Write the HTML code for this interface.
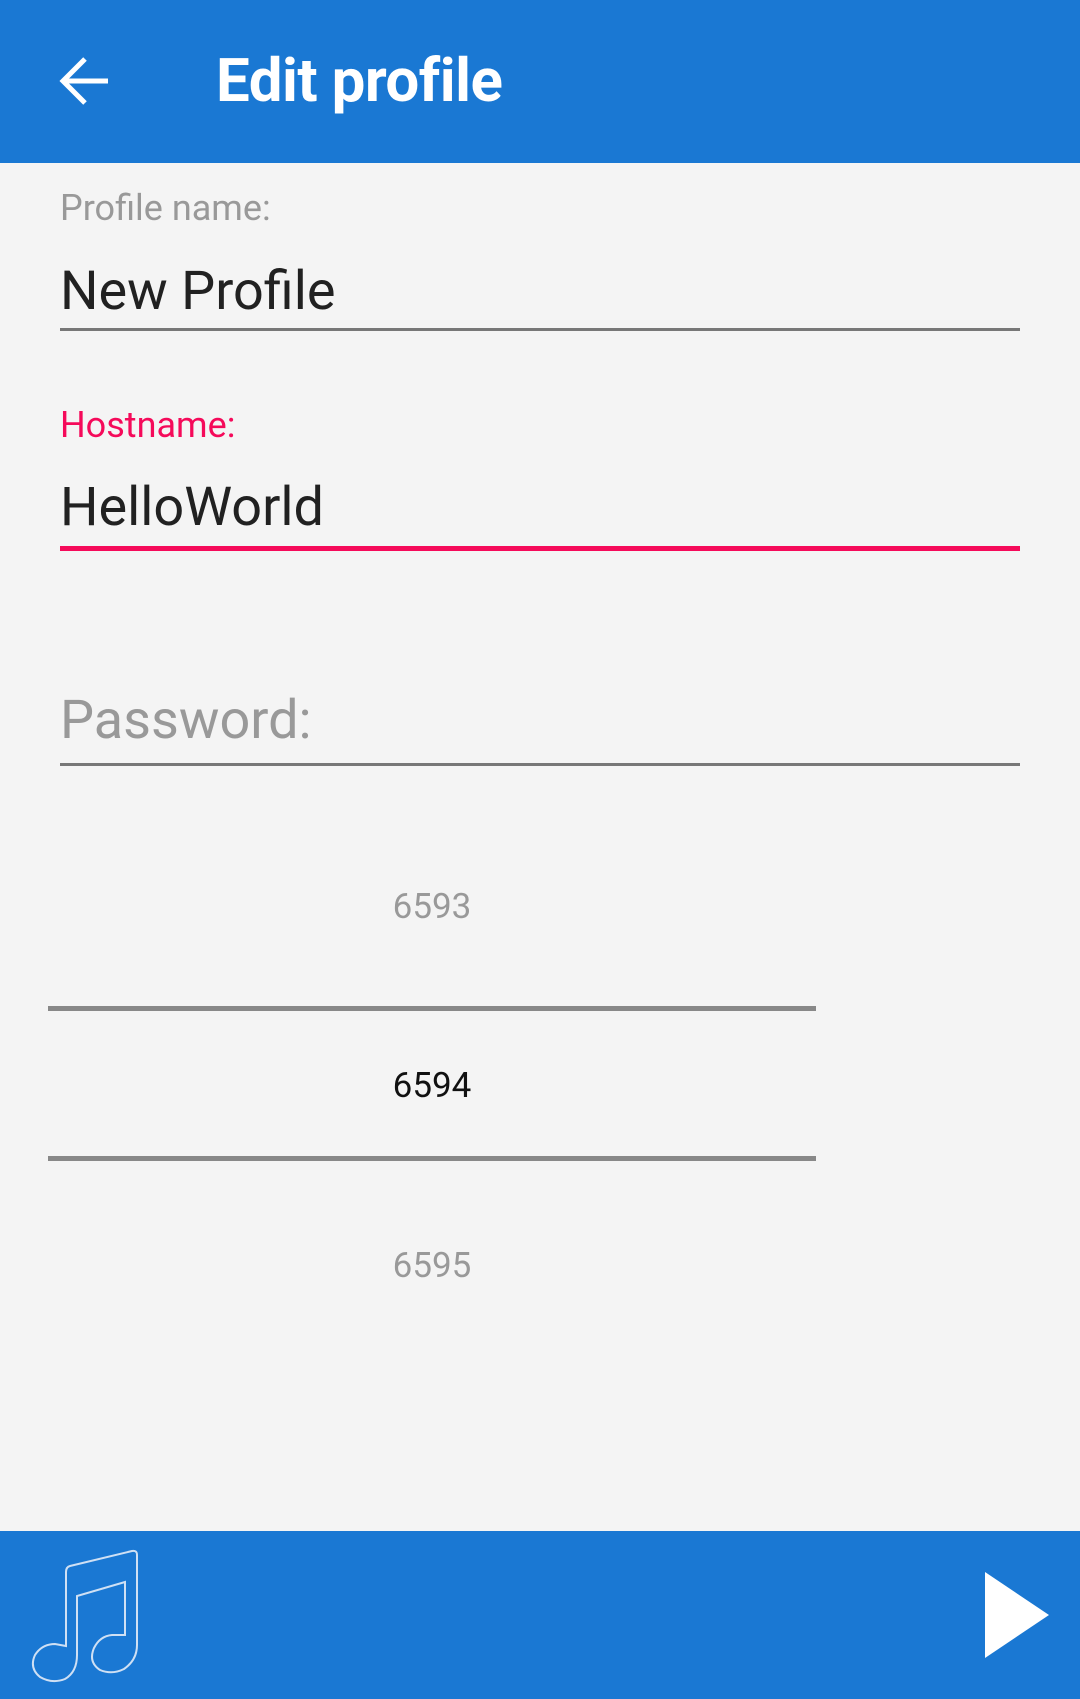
<!DOCTYPE html>
<html><head><style>
body{margin:0;width:1080px;height:1699px;background:#f4f4f4;font-family:"Roboto","Liberation Sans",sans-serif;position:relative;overflow:hidden}
.a{position:absolute;white-space:nowrap}
.hdr{position:absolute;left:0;top:0;width:1080px;height:163px;background:#1a78d3}
.bot{position:absolute;left:0;top:1531px;width:1080px;height:168px;background:#1a78d3}
.ln{position:absolute;height:3px;background:#777}
</style></head><body>
<div class="hdr"></div>
<svg class="a" style="left:58px;top:55px" width="54" height="52" viewBox="0 0 54 52"><path d="M50 26H6M27 4L5 26L27 48" fill="none" stroke="#fff" stroke-width="5"/></svg>
<div class="a" style="left:216px;top:41px;font-size:60px;line-height:80px;color:#fff;font-weight:bold;letter-spacing:-0.5px">Edit profile</div>

<div class="a" style="left:60px;top:186px;font-size:36px;line-height:44px;color:#999">Profile name:</div>
<div class="a" style="left:60px;top:260px;font-size:54px;line-height:64px;color:#212121">New Profile</div>
<div class="ln" style="left:60px;top:328px;width:960px"></div>

<div class="a" style="left:60px;top:403px;font-size:36px;line-height:44px;color:#f50a5a">Hostname:</div>
<div class="a" style="left:60px;top:476px;font-size:54px;line-height:64px;color:#212121">HelloWorld</div>
<div class="ln" style="left:60px;top:546px;width:960px;height:5px;background:#f50a5a"></div>

<div class="a" style="left:60px;top:689px;font-size:54px;line-height:64px;color:#999">Password:</div>
<div class="ln" style="left:60px;top:763px;width:960px"></div>

<div class="a" style="left:48px;width:768px;text-align:center;top:886px;font-size:35px;line-height:42px;color:#999">6593</div>
<div class="ln" style="left:48px;top:1006px;width:768px;height:5px;background:#888"></div>
<div class="a" style="left:48px;width:768px;text-align:center;top:1065px;font-size:35px;line-height:42px;color:#111">6594</div>
<div class="ln" style="left:48px;top:1156px;width:768px;height:5px;background:#888"></div>
<div class="a" style="left:48px;width:768px;text-align:center;top:1245px;font-size:35px;line-height:42px;color:#999">6595</div>

<div class="bot"></div>
<svg class="a" style="left:0;top:1531px" width="160" height="168" viewBox="0 0 160 168"><path d="M66 115V41Q66 36 70 35L132 20Q137 19 137 24V114Q137 129 124 138Q112 144 100 139Q88 131 94 117Q100 105 112 104H125V51L77 65V124Q77 141 65 148Q52 153 40 146Q29 137 35 124Q42 113 55 113Z" fill="none" stroke="#cfe0f4" stroke-width="2"/></svg>
<svg class="a" style="left:983px;top:1572px" width="68" height="86" viewBox="0 0 68 86"><path d="M2 0L66 43L2 86Z" fill="#fff"/></svg>
</body></html>
